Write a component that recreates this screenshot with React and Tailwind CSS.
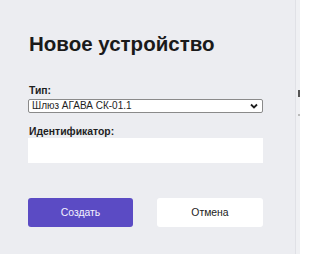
import React from "react";

export default function App() {
  return (
    <div
      className="w-[300px] h-[254px] flex bg-[#ecedf1] overflow-hidden"
      style={{ fontFamily: '"Liberation Sans", Arial, sans-serif' }}
    >
      <div className="w-[295px] shrink-0 pl-[28px] pt-[32px] flex flex-col">
        <h1 className="text-[20.5px] leading-[24px] font-bold text-[#1a1a1a] pl-[1px]">
          Новое устройство
        </h1>
        <label className="mt-[29px] text-[10.4px] leading-[12px] font-bold text-[#1e1e1e] pl-[1px]">
          Тип:
        </label>
        <div className="mt-[2px] w-[235px] h-[14px] bg-white border border-[#8a8a8a] rounded-[2px] flex items-center justify-between pl-[3px] pr-[4px]">
          <span className="text-[10px] leading-[12px] text-[#1e1e1e]">Шлюз АГАВА СК-01.1</span>
          <svg width="8" height="6" viewBox="0 0 8 6">
            <path d="M1 1.5 L4 4.5 L7 1.5" fill="none" stroke="#1e1e1e" strokeWidth="1.8" />
          </svg>
        </div>
        <label className="mt-[13px] text-[10.4px] leading-[12px] font-bold text-[#1e1e1e] pl-[1px]">
          Идентификатор:
        </label>
        <div className="w-[235px] h-[25px] bg-white" />
        <div className="mt-[35px] flex gap-[24px]">
          <button className="w-[105px] h-[29px] bg-[#5b4bc4] rounded-[3px] text-[#f4f2ff] text-[10.4px] flex items-center justify-center">
            Создать
          </button>
          <button className="w-[106px] h-[29px] bg-white rounded-[3px] text-[#222] text-[10.4px] flex items-center justify-center">
            Отмена
          </button>
        </div>
      </div>
      <div className="flex-1 border-l border-[#e0e1e6] bg-[#eff0f3] flex flex-col items-end pt-[90px]">
        <div className="w-[2px] h-[7px] bg-[#555]" />
        <div className="mt-[17px] w-[2px] h-[2px] bg-[#bbb]" />
      </div>
    </div>
  );
}
